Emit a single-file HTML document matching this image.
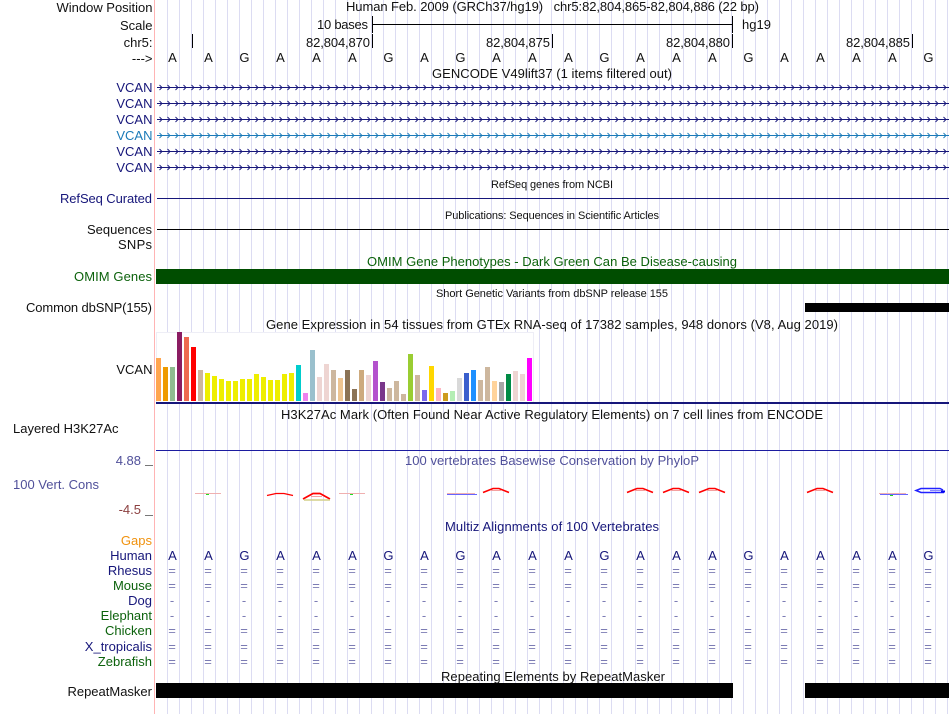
<!DOCTYPE html>
<html><head><meta charset="utf-8"><style>
html,body{margin:0;padding:0;background:#fff}
svg{display:block}
text{font-family:"Liberation Sans",sans-serif;font-size:13px;fill:#111;white-space:pre}
.e{text-anchor:end}.m{text-anchor:middle}
.n{fill:#16167a}.g{fill:#0c620c}.s{font-size:11px}
.c{fill:#7c7cb4}
</style></head><body>
<svg width="950" height="714" viewBox="0 0 950 714" xmlns="http://www.w3.org/2000/svg">
<defs>
<pattern id="grid" x="167" y="0" width="12" height="714" patternUnits="userSpaceOnUse"><rect width="1" height="714" fill="#dcdcf2"/></pattern>
<pattern id="arN" x="156" y="84" width="8" height="16" patternUnits="userSpaceOnUse"><path d="M3.500 1L6 3.500L3.500 6" fill="none" stroke="#16167a" stroke-width=".9"/></pattern>
<pattern id="arB" x="156" y="132" width="8" height="7" patternUnits="userSpaceOnUse"><path d="M3.500 1L6 3.500L3.500 6" fill="none" stroke="#1a7ab8" stroke-width=".9"/></pattern>
</defs>
<rect x="156" width="792" height="714" fill="url(#grid)"/>
<rect x="154" width="1" height="714" fill="#ffb4b4"/>

<text class="e" x="152.500" y="12" textLength="96">Window Position</text>
<text class="e" x="152.500" y="30">Scale</text>
<text class="e" x="152.500" y="47">chr5:</text>
<text class="e" x="152.500" y="63">---&gt;</text>
<text class="m" x="552.500" y="11" textLength="413">Human Feb. 2009 (GRCh37/hg19)   chr5:82,804,865-82,804,886 (22 bp)</text>
<text class="e" x="368" y="29" textLength="51">10 bases</text>
<text x="742" y="29">hg19</text>
<rect x="372" y="24" width="361" height="1" fill="#000"/>
<path d="M372.500 16V33M732.500 16V33M192.500 34V48M372.500 34V48M552.500 34V48M732.500 34V48M912.500 34V48" stroke="#000" fill="none"/>
<text class="e" x="370" y="47" textLength="64">82,804,870</text>
<text class="e" x="550" y="47" textLength="64">82,804,875</text>
<text class="e" x="730" y="47" textLength="64">82,804,880</text>
<text class="e" x="910" y="47" textLength="64">82,804,885</text>
<text class="m" y="62" x="172.400 208.400 244.400 280.400 316.400 352.400 388.400 424.400 460.400 496.400 532.400 568.400 604.400 640.400 676.400 712.400 748.400 784.400 820.400 856.400 892.400 928.400">AAGAAAGAGAAAGAAAGAAAAG</text>
<text class="m" x="552" y="78" textLength="240">GENCODE V49lift37 (1 items filtered out)</text>

<text class="e n" x="152.500" y="92">VCAN</text>
<text class="e n" x="152.500" y="108">VCAN</text>
<text class="e n" x="152.500" y="124">VCAN</text>
<text class="e" x="152.500" y="140" style="fill:#1a7ab8">VCAN</text>
<text class="e n" x="152.500" y="156">VCAN</text>
<text class="e n" x="152.500" y="172">VCAN</text>
<g fill="#16167a">
<rect x="157" y="87" width="792" height="1"/><rect x="157" y="103" width="792" height="1"/><rect x="157" y="119" width="792" height="1"/><rect x="157" y="151" width="792" height="1"/><rect x="157" y="167" width="792" height="1"/>
</g>
<rect x="157" y="135" width="792" height="1" fill="#1a7ab8"/>
<rect x="156" y="84" width="793" height="39" fill="url(#arN)"/>
<rect x="156" y="132" width="793" height="7" fill="url(#arB)"/>
<rect x="156" y="148" width="793" height="23" fill="url(#arN)"/>

<text class="m s" x="552" y="188" textLength="122">RefSeq genes from NCBI</text>
<text class="e n" x="152" y="203" textLength="92">RefSeq Curated</text>
<rect x="157" y="198" width="792" height="1" fill="#16167a"/>
<text class="m s" x="552" y="219" textLength="214">Publications: Sequences in Scientific Articles</text>
<text class="e" x="152" y="234" textLength="65">Sequences</text>
<rect x="157" y="229" width="792" height="1" fill="#000"/>
<text class="e" x="152" y="249" textLength="34">SNPs</text>
<text class="m g" x="552" y="266" textLength="370">OMIM Gene Phenotypes - Dark Green Can Be Disease-causing</text>
<text class="e g" x="152" y="281" textLength="78">OMIM Genes</text>
<rect x="156" y="269" width="793" height="15" fill="#004d00"/>
<text class="m s" x="552" y="297" textLength="232">Short Genetic Variants from dbSNP release 155</text>
<text class="e" x="152" y="312" textLength="126">Common dbSNP(155)</text>
<rect x="805" y="303" width="144" height="9" fill="#000"/>

<text class="m" x="552" y="329" textLength="572">Gene Expression in 54 tissues from GTEx RNA-seq of 17382 samples, 948 donors (V8, Aug 2019)</text>
<text class="e" x="152.500" y="374">VCAN</text>
<rect x="156.500" y="332.500" width="377" height="70" fill="#fff" stroke="#eeeef6"/>
<g>
<rect x="156" y="358" width="5" height="43" fill="#ffa54f"/>
<rect x="163" y="367" width="5" height="34" fill="#ee9a00"/>
<rect x="170" y="367" width="5" height="34" fill="#8fbc8f"/>
<rect x="177" y="332" width="5" height="69" fill="#8b1c62"/>
<rect x="184" y="337" width="5" height="64" fill="#ee6a50"/>
<rect x="191" y="347" width="5" height="54" fill="#ff0000"/>
<rect x="198" y="370" width="5" height="31" fill="#cdb79e"/>
<rect x="205" y="373" width="5" height="28" fill="#eeee00"/>
<rect x="212" y="376" width="5" height="25" fill="#eeee00"/>
<rect x="219" y="379" width="5" height="22" fill="#eeee00"/>
<rect x="226" y="381" width="5" height="20" fill="#eeee00"/>
<rect x="233" y="381" width="5" height="20" fill="#eeee00"/>
<rect x="240" y="379" width="5" height="22" fill="#eeee00"/>
<rect x="247" y="379" width="5" height="22" fill="#eeee00"/>
<rect x="254" y="374" width="5" height="27" fill="#eeee00"/>
<rect x="261" y="377" width="5" height="24" fill="#eeee00"/>
<rect x="268" y="380" width="5" height="21" fill="#eeee00"/>
<rect x="275" y="380" width="5" height="21" fill="#eeee00"/>
<rect x="282" y="374" width="5" height="27" fill="#eeee00"/>
<rect x="289" y="373" width="5" height="28" fill="#eeee00"/>
<rect x="296" y="365" width="5" height="36" fill="#00cdcd"/>
<rect x="303" y="393" width="5" height="8" fill="#ee82ee"/>
<rect x="310" y="350" width="5" height="51" fill="#9ac0cd"/>
<rect x="317" y="377" width="5" height="24" fill="#eed5d2"/>
<rect x="324" y="364" width="5" height="37" fill="#eed5d2"/>
<rect x="331" y="370" width="5" height="31" fill="#cdb79e"/>
<rect x="338" y="378" width="5" height="23" fill="#eec591"/>
<rect x="345" y="370" width="5" height="31" fill="#8b7355"/>
<rect x="352" y="389" width="5" height="12" fill="#8b7355"/>
<rect x="359" y="370" width="5" height="31" fill="#cdaa7d"/>
<rect x="366" y="375" width="5" height="26" fill="#eed5d2"/>
<rect x="373" y="361" width="5" height="40" fill="#b452cd"/>
<rect x="380" y="382" width="5" height="19" fill="#7a378b"/>
<rect x="387" y="388" width="5" height="13" fill="#cdb79e"/>
<rect x="394" y="381" width="5" height="20" fill="#cdb79e"/>
<rect x="401" y="394" width="5" height="7" fill="#cdb79e"/>
<rect x="408" y="354" width="5" height="47" fill="#9acd32"/>
<rect x="415" y="375" width="5" height="26" fill="#cdb79e"/>
<rect x="422" y="390" width="5" height="11" fill="#7b68ee"/>
<rect x="429" y="366" width="5" height="35" fill="#ffd700"/>
<rect x="436" y="388" width="5" height="13" fill="#ffb6c1"/>
<rect x="443" y="393" width="5" height="8" fill="#cd9b1d"/>
<rect x="450" y="391" width="5" height="10" fill="#b4eeb4"/>
<rect x="457" y="378" width="5" height="23" fill="#d9d9d9"/>
<rect x="464" y="373" width="5" height="28" fill="#3a5fcd"/>
<rect x="471" y="370" width="5" height="31" fill="#1e90ff"/>
<rect x="478" y="380" width="5" height="21" fill="#cdb79e"/>
<rect x="485" y="367" width="5" height="34" fill="#cdb79e"/>
<rect x="492" y="381" width="5" height="20" fill="#ffd39b"/>
<rect x="499" y="382" width="5" height="19" fill="#a6a6a6"/>
<rect x="506" y="374" width="5" height="27" fill="#008b45"/>
<rect x="513" y="371" width="5" height="30" fill="#eed5d2"/>
<rect x="520" y="374" width="5" height="27" fill="#eed5d2"/>
<rect x="527" y="358" width="5" height="43" fill="#ff00ff"/>
</g>
<rect x="156" y="402" width="793" height="2" fill="#16167a"/>

<text class="m" x="552" y="419" textLength="542">H3K27Ac Mark (Often Found Near Active Regulatory Elements) on 7 cell lines from ENCODE</text>
<text x="13" y="433">Layered H3K27Ac</text>
<rect x="156" y="450" width="793" height="1" fill="#1c1ca0"/>
<text class="e" x="141" y="465" style="fill:#50509a">4.88</text>
<path d="M145 465.500H153" stroke="#777"/>
<text x="13" y="489" style="fill:#50509a">100 Vert. Cons</text>
<text class="e" x="141" y="514" style="fill:#8c4040">-4.5</text>
<path d="M145 515.500H153" stroke="#777"/>
<text class="m" x="552" y="465" textLength="294" style="fill:#50509a">100 vertebrates Basewise Conservation by PhyloP</text>

<g fill="none" stroke-width="1">
<path d="M195 493.500H221" stroke="#f0b0b0"/><path d="M206 494.500H209" stroke="#22dd22"/>
<path d="M339 493.500H365" stroke="#f0b0b0"/><path d="M350 494.500H353" stroke="#22dd22"/>
<path d="M267 495.500L276 493.500H284L293 495.500" stroke="#f00" stroke-width="1.300"/>
<path d="M303 499L313 493.500H320L330 499" stroke="#f00" stroke-width="1.700"/><path d="M311 496.500H322" stroke="#f4a0a0"/><path d="M304 500H330" stroke="#d4cf88" stroke-width="1.500"/>
<path d="M447 493.500H475" stroke="#f0b0b0"/><path d="M447 494.500H477" stroke="#6666ff"/>
<g stroke="#f00" stroke-width="1.600" stroke-linejoin="miter">
<path d="M483 492.500L493 488.500H499L509 492.500"/>
<path d="M627 492.500L637 488.500H643L653 492.500"/>
<path d="M663 492.500L673 488.500H679L689 492.500"/>
<path d="M699 492.500L709 488.500H715L725 492.500"/>
<path d="M807 492.500L817 488.500H823L833 492.500"/>
</g>
<g stroke="#f4a0a0">
<path d="M491 490.500H501"/><path d="M635 490.500H645"/><path d="M671 490.500H681"/><path d="M707 490.500H717"/><path d="M815 490.500H825"/>
</g>
<path d="M879 493.500H906" stroke="#f0b0b0"/><path d="M880 494.500H908" stroke="#6666ff"/><path d="M890 495.500H893" stroke="#22dd22"/>
<path d="M943 490L940 488.500H921L916 490.500L921 492.500H944" stroke="#2222ff" stroke-width="1.500"/><path d="M930 490.500H942" stroke="#8888ff"/><path d="M941 491.500H945" stroke="#0000ee" stroke-width="2"/>
</g>

<text class="m n" x="552" y="531" textLength="214">Multiz Alignments of 100 Vertebrates</text>
<text class="e" x="152" y="545" style="fill:#f0920f">Gaps</text>
<text class="e n" x="152" y="560">Human</text>
<text class="m n" y="560" x="172.400 208.400 244.400 280.400 316.400 352.400 388.400 424.400 460.400 496.400 532.400 568.400 604.400 640.400 676.400 712.400 748.400 784.400 820.400 856.400 892.400 928.400">AAGAAAGAGAAAGAAAGAAAAG</text>
<text class="e n" x="152" y="575">Rhesus</text>
<text class="e g" x="152" y="590">Mouse</text>
<text class="e n" x="152" y="605">Dog</text>
<text class="e g" x="152" y="620">Elephant</text>
<text class="e g" x="152" y="635">Chicken</text>
<text class="e n" x="152" y="651">X_tropicalis</text>
<text class="e g" x="152" y="666">Zebrafish</text>
<text class="m c" y="575" x="172 208 244 280 316 352 388 424 460 496 532 568 604 640 676 712 748 784 820 856 892 928">======================</text>
<text class="m c" y="590" x="172 208 244 280 316 352 388 424 460 496 532 568 604 640 676 712 748 784 820 856 892 928">======================</text>
<text class="m c" y="605" x="172 208 244 280 316 352 388 424 460 496 532 568 604 640 676 712 748 784 820 856 892 928">----------------------</text>
<text class="m c" y="620" x="172 208 244 280 316 352 388 424 460 496 532 568 604 640 676 712 748 784 820 856 892 928">----------------------</text>
<text class="m c" y="635" x="172 208 244 280 316 352 388 424 460 496 532 568 604 640 676 712 748 784 820 856 892 928">======================</text>
<text class="m c" y="651" x="172 208 244 280 316 352 388 424 460 496 532 568 604 640 676 712 748 784 820 856 892 928">======================</text>
<text class="m c" y="666" x="172 208 244 280 316 352 388 424 460 496 532 568 604 640 676 712 748 784 820 856 892 928">======================</text>

<text class="m" x="553" y="681" textLength="224">Repeating Elements by RepeatMasker</text>
<text class="e" x="152" y="696">RepeatMasker</text>
<rect x="156" y="683" width="577" height="15" fill="#000"/>
<rect x="805" y="683" width="144" height="15" fill="#000"/>
</svg>
</body></html>
